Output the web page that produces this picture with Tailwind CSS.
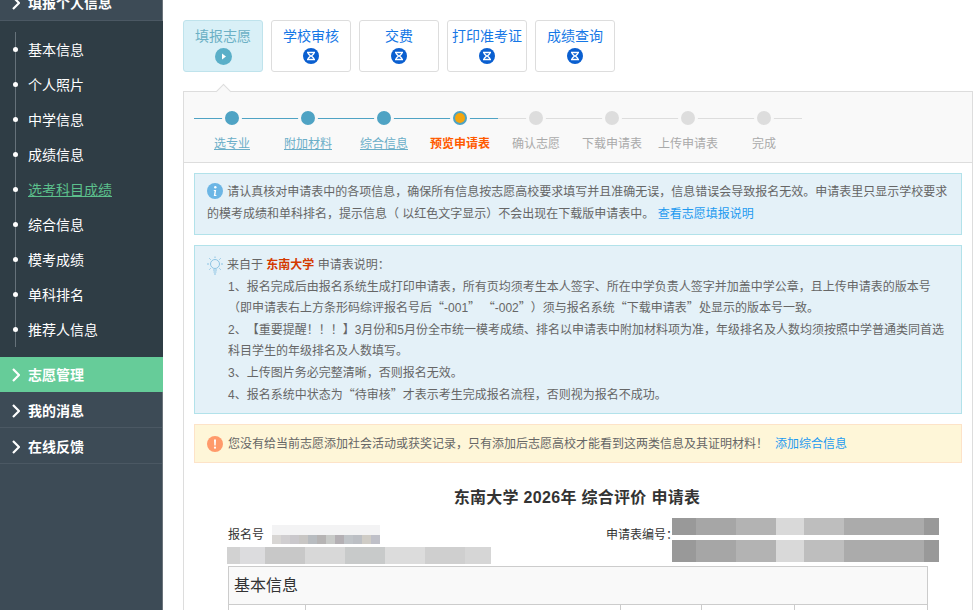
<!DOCTYPE html>
<html lang="zh-CN">
<head>
  <meta charset="UTF-8" />
  <title>填报志愿</title>
  <script src="https://cdn.jsdelivr.net/npm/@tailwindcss/browser@4"></script>
</head>
<body class="bg-white">
  <div class="flex h-[610px] w-[974px] overflow-hidden font-['Liberation_Sans','Noto_Sans_CJK_SC',sans-serif] [text-spacing-trim:space-all] text-xs text-[#666]">
    <!-- Sidebar -->
    <aside class="w-[163px] shrink-0 -mt-[14px] h-[624px] bg-[#3d4b56] border-r border-[#6b747b] text-sm text-white">
      <div class="flex items-center h-[35px] pl-[12px] gap-[8px] font-bold border-b border-[#4b5863]">
        <svg class="w-[8px] h-[14px]" viewBox="0 0 8 14" fill="none" stroke="white" stroke-width="2.2"><path d="M1 1l6 6-6 6"/></svg>
        <span>填报个人信息</span>
      </div>
      <div class="-mr-px bg-[#2f3d45] h-[336px] pt-[11px] relative">
        <div class="absolute left-[15px] top-[11px] w-px h-[315px] bg-[#66727a]"></div>
        <ul>
          <li class="flex items-center h-[35px] pl-[28px] relative"><i class="absolute left-[13px] w-[5px] h-[5px] rounded-full bg-white"></i>基本信息</li>
          <li class="flex items-center h-[35px] pl-[28px] relative"><i class="absolute left-[13px] w-[5px] h-[5px] rounded-full bg-white"></i>个人照片</li>
          <li class="flex items-center h-[35px] pl-[28px] relative"><i class="absolute left-[13px] w-[5px] h-[5px] rounded-full bg-white"></i>中学信息</li>
          <li class="flex items-center h-[35px] pl-[28px] relative"><i class="absolute left-[13px] w-[5px] h-[5px] rounded-full bg-white"></i>成绩信息</li>
          <li class="flex items-center h-[35px] pl-[28px] relative text-[#5cc08c] underline"><i class="absolute left-[13px] w-[5px] h-[5px] rounded-full bg-white"></i>选考科目成绩</li>
          <li class="flex items-center h-[35px] pl-[28px] relative"><i class="absolute left-[13px] w-[5px] h-[5px] rounded-full bg-white"></i>综合信息</li>
          <li class="flex items-center h-[35px] pl-[28px] relative"><i class="absolute left-[13px] w-[5px] h-[5px] rounded-full bg-white"></i>模考成绩</li>
          <li class="flex items-center h-[35px] pl-[28px] relative"><i class="absolute left-[13px] w-[5px] h-[5px] rounded-full bg-white"></i>单科排名</li>
          <li class="flex items-center h-[35px] pl-[28px] relative"><i class="absolute left-[13px] w-[5px] h-[5px] rounded-full bg-white"></i>推荐人信息</li>
        </ul>
      </div>
      <div class="-mr-px flex items-center h-[35px] pl-[12px] gap-[8px] font-bold bg-[#66cc99]">
        <svg class="w-[8px] h-[14px]" viewBox="0 0 8 14" fill="none" stroke="white" stroke-width="2.2"><path d="M1 1l6 6-6 6"/></svg>
        <span>志愿管理</span>
      </div>
      <div class="flex items-center h-[36px] pt-[2px] pl-[12px] gap-[8px] font-bold border-b border-[#4b5863]">
        <svg class="w-[8px] h-[14px]" viewBox="0 0 8 14" fill="none" stroke="white" stroke-width="2.2"><path d="M1 1l6 6-6 6"/></svg>
        <span>我的消息</span>
      </div>
      <div class="flex items-center h-[36px] pt-[2px] pl-[12px] gap-[8px] font-bold border-b border-[#4b5863]">
        <svg class="w-[8px] h-[14px]" viewBox="0 0 8 14" fill="none" stroke="white" stroke-width="2.2"><path d="M1 1l6 6-6 6"/></svg>
        <span>在线反馈</span>
      </div>
    </aside>

    <!-- Main -->
    <main class="flex-1 min-w-0 pl-[20px] pr-px pt-[20px]">
      <!-- Tabs -->
      <div class="flex gap-[8px] text-sm text-[#1577e6]">
        <div class="w-[80px] h-[52px] rounded-[3px] border border-[#bfe3ec] bg-[#d9f0f7] text-[#6cb0c5] flex flex-col items-center pt-[6px] gap-[3px]">
          <span class="leading-[18px]">填报志愿</span>
          <svg class="w-[17px] h-[17px]" viewBox="0 0 17 17"><circle cx="8.5" cy="8.5" r="8.5" fill="#5aafc8"/><path d="M7 5.5l4 3-4 3z" fill="white"/></svg>
        </div>
        <div class="w-[80px] h-[52px] rounded-[3px] border border-[#ddd] flex flex-col items-center pt-[6px] gap-[3px]">
          <span class="leading-[18px]">学校审核</span>
          <svg class="w-[16px] h-[16px]" viewBox="0 0 16 16"><circle cx="8" cy="8" r="8" fill="#0a5fd0"/><path d="M4 4.500h8M4 11.500h8M5 4.500c0 2.500 2.500 2.500 2.500 3.500S5 9 5 11.500M11 4.500c0 2.500-2.500 2.500-2.500 3.500s2.500 1 2.500 3.500" fill="none" stroke="white" stroke-width="1.300"/></svg>
        </div>
        <div class="w-[80px] h-[52px] rounded-[3px] border border-[#ddd] flex flex-col items-center pt-[6px] gap-[3px]">
          <span class="leading-[18px]">交费</span>
          <svg class="w-[16px] h-[16px]" viewBox="0 0 16 16"><circle cx="8" cy="8" r="8" fill="#0a5fd0"/><path d="M4 4.500h8M4 11.500h8M5 4.500c0 2.500 2.500 2.500 2.500 3.500S5 9 5 11.500M11 4.500c0 2.500-2.500 2.500-2.500 3.500s2.500 1 2.500 3.500" fill="none" stroke="white" stroke-width="1.300"/></svg>
        </div>
        <div class="w-[80px] h-[52px] rounded-[3px] border border-[#ddd] flex flex-col items-center pt-[6px] gap-[3px]">
          <span class="leading-[18px]">打印准考证</span>
          <svg class="w-[16px] h-[16px]" viewBox="0 0 16 16"><circle cx="8" cy="8" r="8" fill="#0a5fd0"/><path d="M4 4.500h8M4 11.500h8M5 4.500c0 2.500 2.500 2.500 2.500 3.500S5 9 5 11.500M11 4.500c0 2.500-2.500 2.500-2.500 3.500s2.500 1 2.500 3.500" fill="none" stroke="white" stroke-width="1.300"/></svg>
        </div>
        <div class="w-[80px] h-[52px] rounded-[3px] border border-[#ddd] flex flex-col items-center pt-[6px] gap-[3px]">
          <span class="leading-[18px]">成绩查询</span>
          <svg class="w-[16px] h-[16px]" viewBox="0 0 16 16"><circle cx="8" cy="8" r="8" fill="#0a5fd0"/><path d="M4 4.500h8M4 11.500h8M5 4.500c0 2.500 2.500 2.500 2.500 3.500S5 9 5 11.500M11 4.500c0 2.500-2.500 2.500-2.500 3.500s2.500 1 2.500 3.500" fill="none" stroke="white" stroke-width="1.300"/></svg>
        </div>
      </div>

      <!-- Panel -->
      <div class="relative mt-[19px] border border-[#ddd] h-[600px]">
        <div class="absolute left-[34px] -top-[6px] w-[11px] h-[11px] rotate-45 bg-[#f9f9f9] border-l border-t border-[#ddd]"></div>

        <!-- Steps -->
        <div class="flex h-[71px] bg-[#f9f9f9] border-b border-[#ddd] pl-[10px] pt-[19px]">
          <div class="relative w-[76px] text-center">
            <div class="absolute left-0 right-0 top-[7px] h-px bg-[#4fa3c4]"></div>
            <div class="relative mx-auto w-[20px] h-[20px] -mt-[3px] rounded-full border-[3px] border-[#f9f9f9] bg-[#4fa3c4]"></div>
            <a class="block mt-[7px] leading-[18px] text-[#6aaec8] underline">选专业</a>
          </div>
          <div class="relative w-[76px] text-center">
            <div class="absolute left-0 right-0 top-[7px] h-px bg-[#4fa3c4]"></div>
            <div class="relative mx-auto w-[20px] h-[20px] -mt-[3px] rounded-full border-[3px] border-[#f9f9f9] bg-[#4fa3c4]"></div>
            <a class="block mt-[7px] leading-[18px] text-[#6aaec8] underline">附加材料</a>
          </div>
          <div class="relative w-[76px] text-center">
            <div class="absolute left-0 right-0 top-[7px] h-px bg-[#4fa3c4]"></div>
            <div class="relative mx-auto w-[20px] h-[20px] -mt-[3px] rounded-full border-[3px] border-[#f9f9f9] bg-[#4fa3c4]"></div>
            <a class="block mt-[7px] leading-[18px] text-[#6aaec8] underline">综合信息</a>
          </div>
          <div class="relative w-[76px] text-center">
            <div class="absolute left-0 right-0 top-[7px] h-px bg-[#4fa3c4]"></div>
            <div class="relative mx-auto w-[20px] h-[20px] -mt-[3px] rounded-full border-[3px] border-[#f9f9f9] bg-[#4fa3c4] flex items-center justify-center"><i class="block w-[10px] h-[10px] rounded-full bg-[#f5a60f]"></i></div>
            <span class="block mt-[7px] leading-[18px] font-bold text-[#ff5a00]">预览申请表</span>
          </div>
          <div class="relative w-[76px] text-center">
            <div class="absolute left-0 right-0 top-[7px] h-px bg-[#ddd]"></div>
            <div class="relative mx-auto w-[20px] h-[20px] -mt-[3px] rounded-full border-[3px] border-[#f9f9f9] bg-[#ddd]"></div>
            <span class="block mt-[7px] leading-[18px] text-[#aaa]">确认志愿</span>
          </div>
          <div class="relative w-[76px] text-center">
            <div class="absolute left-0 right-0 top-[7px] h-px bg-[#ddd]"></div>
            <div class="relative mx-auto w-[20px] h-[20px] -mt-[3px] rounded-full border-[3px] border-[#f9f9f9] bg-[#ddd]"></div>
            <span class="block mt-[7px] leading-[18px] text-[#aaa]">下载申请表</span>
          </div>
          <div class="relative w-[76px] text-center">
            <div class="absolute left-0 right-0 top-[7px] h-px bg-[#ddd]"></div>
            <div class="relative mx-auto w-[20px] h-[20px] -mt-[3px] rounded-full border-[3px] border-[#f9f9f9] bg-[#ddd]"></div>
            <span class="block mt-[7px] leading-[18px] text-[#aaa]">上传申请表</span>
          </div>
          <div class="relative w-[76px] text-center">
            <div class="absolute left-0 right-0 top-[7px] h-px bg-[#ddd]"></div>
            <div class="relative mx-auto w-[20px] h-[20px] -mt-[3px] rounded-full border-[3px] border-[#f9f9f9] bg-[#ddd]"></div>
            <span class="block mt-[7px] leading-[18px] text-[#aaa]">完成</span>
          </div>
        </div>

        <div class="px-[10px] pt-[10px]">
          <!-- Notice -->
          <div class="h-[62px] border border-[#b2e2ea] bg-[#e4f1f8] pl-[12px] pr-[12px] pt-[7px] leading-[22px]">
            <svg class="inline-block align-[-3px] w-[16px] h-[16px] mr-[1px]" viewBox="0 0 16 16"><circle cx="8" cy="8" r="8" fill="#6cb6e5"/><circle cx="8.300" cy="4.300" r="1.200" fill="white"/><path d="M6.800 7h2.400l-.8 5h1v1H6.800l.8-5h-.8z" fill="white"/></svg>
            请认真核对申请表中的各项信息，确保所有信息按志愿高校要求填写并且准确无误，信息错误会导致报名无效。申请表里只显示学校要求的模考成绩和单科排名，提示信息（ 以红色文字显示）不会出现在下载版申请表中。 <a class="text-[#1e9bf0]">查看志愿填报说明</a>
          </div>

          <!-- Explanation -->
          <div class="mt-[10px] h-[169px] border border-[#b2e2ea] bg-[#e4f1f8] pl-[12px] pr-[12px] pt-[9px] leading-[21.600px]">
            <div class="flex items-center">
              <svg class="w-[18px] h-[20px] mr-[3px] -ml-px" viewBox="0 0 18 20" fill="none" stroke="#8cc4e4" stroke-width="1"><circle cx="9" cy="8" r="4.500"/><path d="M7 14h4M7.500 16h3M8 18h2M9 0.500v1.500M1 8h2M15 8h2M3.300 2.300l1.400 1.400M14.700 2.300l-1.400 1.400M3.300 13.700l1.400-1.400M14.700 13.700l-1.400-1.400"/></svg>
              <span>来自于 <b class="text-[#d43a00]">东南大学</b> 申请表说明：</span>
            </div>
            <div class="pl-[21px]">
              <p>1、报名完成后由报名系统生成打印申请表，所有页均须考生本人签字、所在中学负责人签字并加盖中学公章，且上传申请表的版本号</p>
              <p>（即申请表右上方条形码综评报名号后<span class="leading-none font-['Noto_Sans_CJK_SC']">“</span>-001<span class="leading-none font-['Noto_Sans_CJK_SC']">” “</span>-002<span class="leading-none font-['Noto_Sans_CJK_SC']">”</span>）须与报名系统<span class="leading-none font-['Noto_Sans_CJK_SC']">“</span>下载申请表<span class="leading-none font-['Noto_Sans_CJK_SC']">”</span>处显示的版本号一致。</p>
              <p>2、【重要提醒！！！】3月份和5月份全市统一模考成绩、排名以申请表中附加材料项为准，年级排名及人数均须按照中学普通类同首选</p>
              <p>科目学生的年级排名及人数填写。</p>
              <p>3、上传图片务必完整清晰，否则报名无效。</p>
              <p>4、报名系统中状态为<span class="leading-none font-['Noto_Sans_CJK_SC']">“</span>待审核<span class="leading-none font-['Noto_Sans_CJK_SC']">”</span>才表示考生完成报名流程，否则视为报名不成功。</p>
            </div>
          </div>

          <!-- Warning -->
          <div class="mt-[10px] h-[39px] border border-[#fde3c8] bg-[#fef6d8] pl-[12px] flex items-center">
            <svg class="w-[16px] h-[16px] mr-[5px]" viewBox="0 0 16 16"><circle cx="8" cy="8" r="8" fill="#ff9a6b"/><path d="M7 3.500h2l-.3 6H7.300z" fill="white"/><circle cx="8" cy="11.700" r="1.100" fill="white"/></svg>
            <span>您没有给当前志愿添加社会活动或获奖记录，只有添加后志愿高校才能看到这两类信息及其证明材料！</span>
            <a class="text-[#1e9bf0] ml-[7px]">添加综合信息</a>
          </div>

          <!-- Application form -->
          <h2 class="mt-[24px] pr-[2px] text-center text-base tracking-[0.3px] leading-[22px] font-bold text-[#333]">东南大学 2026年 综合评价 申请表</h2>

          <div class="relative flex ml-[33px] h-[48px] mt-[9px] text-[#333]">
            <div class="w-[378px]">
              <div class="flex h-[26px] items-end">
                <span class="leading-[18px] ml-px mr-[8px]">报名号</span>
                <div class="w-[108px] h-[19px] flex flex-col">
                  <div class="h-[10px] bg-[#f3f3f4]"></div>
                  <div class="flex h-[9px]">
                    <i class="block w-[9px] bg-[#d8d6d4]"></i><i class="block w-[9px] bg-[#d0ced0]"></i><i class="block w-[9px] bg-[#cac8cc]"></i><i class="block w-[9px] bg-[#c8c6c4]"></i><i class="block w-[9px] bg-[#b8bcc0]"></i><i class="block w-[9px] bg-[#b6b4b4]"></i><i class="block w-[9px] bg-[#c8cac8]"></i><i class="block w-[9px] bg-[#b4b0b4]"></i><i class="block w-[9px] bg-[#c0c4c8]"></i><i class="block w-[9px] bg-[#bcbfc4]"></i><i class="block w-[9px] bg-[#cfccc6]"></i><i class="block w-[9px] bg-[#bfc0c8]"></i>
                  </div>
                </div>
              </div>
              <div class="flex mt-[3px] h-[17px] w-[264px]">
                <i class="block w-[13px] bg-[#d2d2d2]"></i><i class="block w-[25px] bg-[#dcdcde]"></i><i class="block w-[40px] bg-[#c8c8c8]"></i><i class="block w-[40px] bg-[#d8d8d8]"></i><i class="block w-[40px] bg-[#c8caca]"></i><i class="block w-[40px] bg-[#dcdcdc]"></i><i class="block w-[40px] bg-[#cfcfcf]"></i><i class="block w-[26px] bg-[#d6d6d6]"></i>
              </div>
            </div>
            <span class="absolute left-[379px] top-[8px] leading-[18px]">申请表编号：</span>
            <div class="absolute left-[445px] top-0 w-[267px]">
              <div class="flex h-[17px]">
                <i class="block w-[24px] bg-[#999]"></i><i class="block w-[40px] bg-[#a6a6a6]"></i><i class="block w-[40px] bg-[#b3b3b3]"></i><i class="block w-[28px] bg-[#d9d9d9]"></i><i class="block w-[40px] bg-[#bebebe]"></i><i class="block w-[80px] bg-[#ababab]"></i><i class="block w-[15px] bg-[#999]"></i>
              </div>
              <div class="flex h-[22px] mt-[5px]">
                <i class="block w-[24px] bg-[#999]"></i><i class="block w-[40px] bg-[#a6a6a6]"></i><i class="block w-[40px] bg-[#b3b3b3]"></i><i class="block w-[28px] bg-[#d9d9d9]"></i><i class="block w-[40px] bg-[#bebebe]"></i><i class="block w-[80px] bg-[#ababab]"></i><i class="block w-[15px] bg-[#999]"></i>
              </div>
            </div>
          </div>

          <div class="ml-[34px] w-[700px] border border-[#ccc]">
            <div class="h-[38px] bg-[#f9f9f9] border-b border-[#ccc] flex items-center pl-[5px] text-base text-[#333]">基本信息</div>
            <div class="flex h-[40px]">
              <div class="w-[77px] border-r border-[#ccc]"></div>
              <div class="w-[315px] border-r border-[#ccc]"></div>
              <div class="w-[81px] border-r border-[#ccc]"></div>
              <div class="w-[93px] border-r border-[#ccc]"></div>
            </div>
          </div>
        </div>
      </div>
    </main>
  </div>
</body>
</html>
